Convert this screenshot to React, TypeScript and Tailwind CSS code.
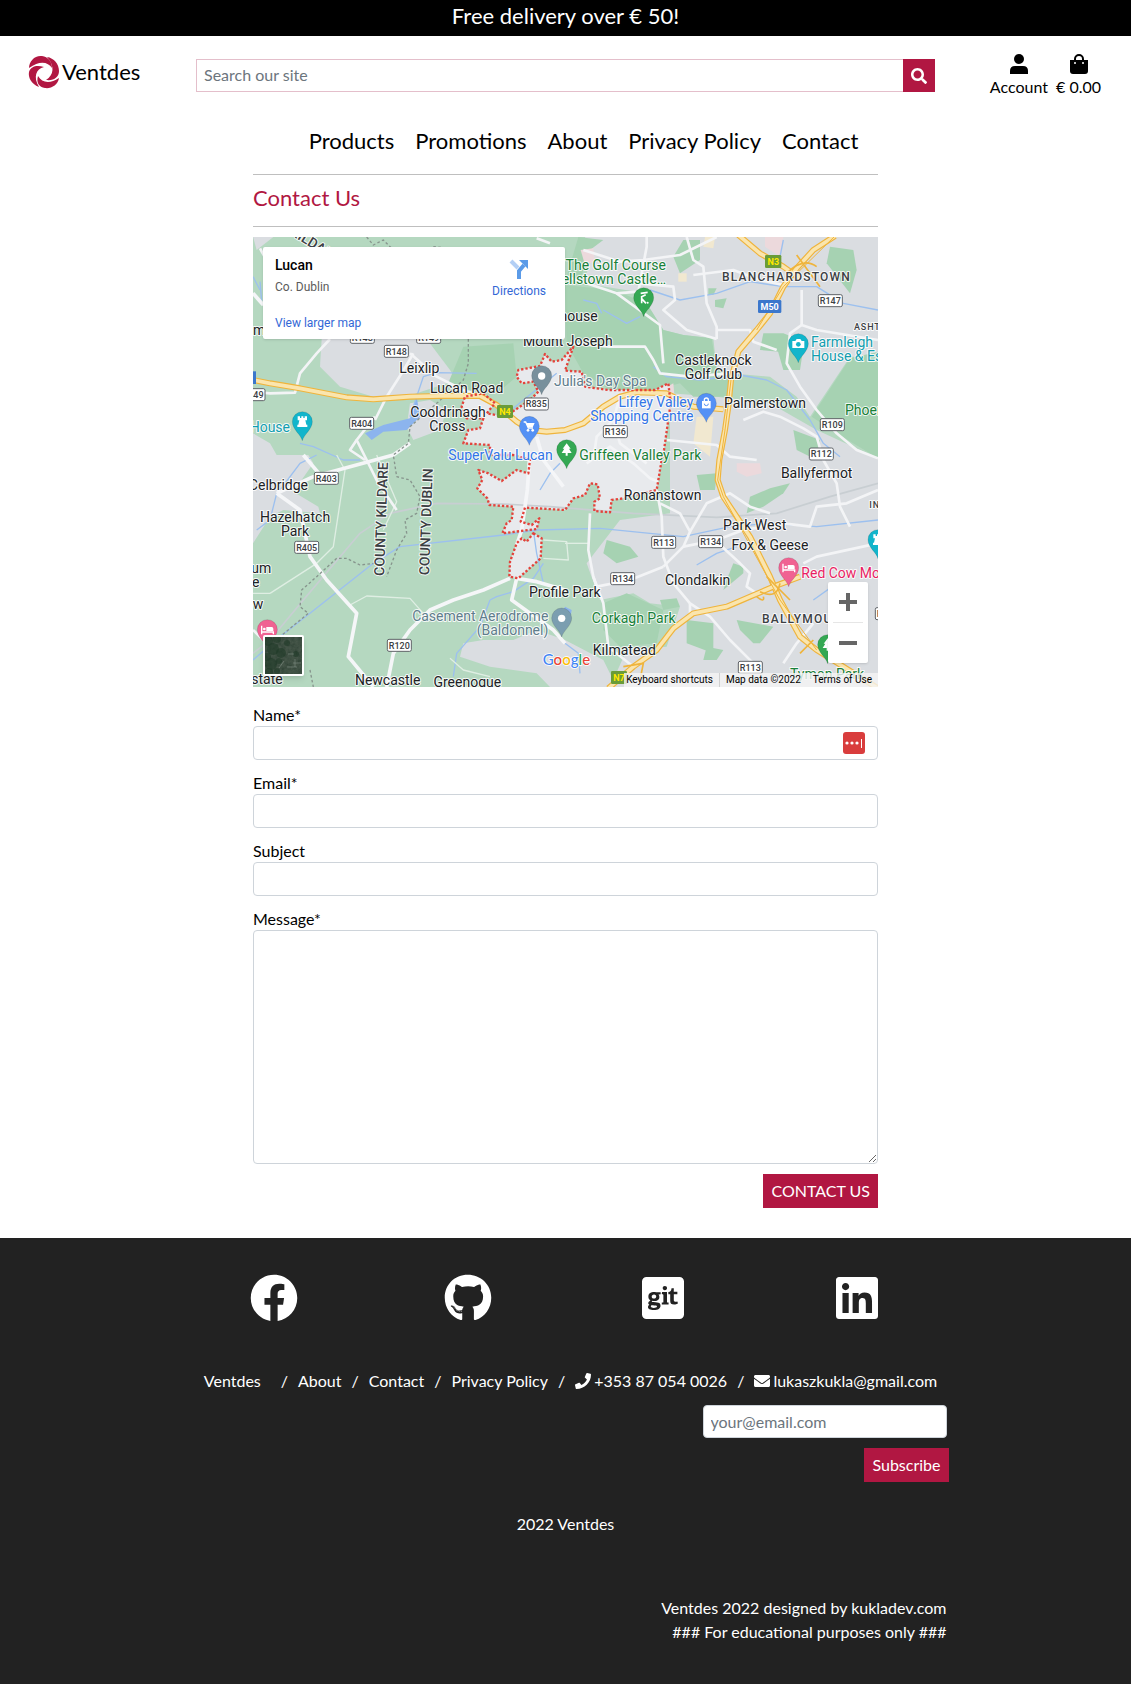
import React from "react";
import { FaFacebook, FaGithub, FaGitSquare, FaLinkedin, FaPhone, FaEnvelope, FaSearch } from "react-icons/fa";

const ROADS_THIN = [
  "M9,485 L60,490 L135,488 L150,430 L200,370 L240,327",
  "M375,560 L320,630 L350,690 L385,760 L440,840",
  "M320,630 L300,660 L345,690",
  "M30,55 L60,110",
  "M480,370 L560,440 L640,480 L700,500",
  "M490,370 L455,430 L410,500 L375,570",
  "M860,25 L900,40",
  "M950,140 L1100,190 L1165,185 L1190,50 L1190,21",
  "M960,340 L1080,350 L1185,350 L1210,390 L1230,430 L1320,440 L1440,430",
  "M1000,60 L1110,95 L1180,90 L1290,75 L1400,21",
  "M1100,190 L1230,285 L1240,400",
  "M1165,160 L1270,170 L1275,210 L1240,240 L1310,300 L1400,327",
  "M1310,21 L1330,90 L1360,110 L1370,220 L1400,290 L1400,327",
  "M1330,135 L1450,120 L1530,150 L1600,165",
  "M1400,300 L1500,300 L1510,335 L1580,360",
  "M1655,180 L1655,285 L1700,300 L1884,330",
  "M1655,285 L1620,310 L1610,400 L1650,470 L1700,540 L1760,610 L1820,660 L1884,685",
  "M1480,570 L1540,545 L1590,560 L1660,595 L1700,620 L1720,690 L1760,760 L1770,830 L1800,890",
  "M1110,500 L1090,570 L1040,620 L1030,690",
  "M1090,570 L1110,640 L1190,700",
  "M1250,630 L1400,645 L1440,680 L1520,690",
  "M1010,700 L1080,650 L1150,700 L1200,745 L1225,755",
  "M1220,780 L1235,860 L1240,980 L1270,1060 L1320,1120",
  "M1230,820 L1290,850 L1320,905 L1300,950 L1240,1010",
  "M1320,905 L1370,820 L1440,790 L1500,830 L1560,850",
  "M1300,950 L1400,930 L1480,900 L1600,880 L1680,890 L1700,830 L1790,820 L1884,780",
  "M1400,935 L1470,1000 L1500,1030 L1490,1070 L1520,1090",
  "M1020,850 L1015,960 L1030,1040 L1060,1120 L1075,1250 L1150,1310",
  "M1240,1010 L1140,1050 L1040,1070 L1030,1040",
  "M1320,1120 L1380,1160 L1440,1230 L1520,1310",
  "M1320,1120 L1320,1160",
  "M1660,1000 L1700,980 L1884,940",
  "M1690,1180 L1640,1240 L1600,1300",
  "M9,1200 L50,1240",
];

const ROADS_WIDE = [
  "M160,675 L215,740",
  "M80,790 L190,740 L300,710 L430,675 L480,640",
  "M80,790 L150,840 L180,980 L230,1050 L320,1150 L295,1280 L370,1371",
  "M410,1371 L430,1270 L480,1200 L540,1140 L610,1110 L700,1080 L780,1045",
  "M800,1045 L785,1110 L840,1150 L910,1200 L945,1240",
  "M800,1045 L860,1055 L945,1080",
  "M839,680 L832,780 L815,900 L800,945",
  "M860,620 L880,690 L940,770",
  "M9,190 L40,225",
];

const PARKS = [
  "M945,165 L1090,180 L1190,220 L1240,300 L1300,315 L1385,325 L1400,420 L1440,425 L1440,500 L1330,500 L1290,460 L1215,480 L1080,480 L1000,430 L950,340 Z",
  "M985,21 L1060,30 L1020,60 L990,150 L950,140 Z",
  "M1300,30 L1350,30 L1350,90 L1290,130 L1270,80 Z",
  "M1740,50 L1810,60 L1820,120 L1800,190 L1730,100 Z",
  "M1375,175 L1400,175 L1390,195 L1375,195 Z",
  "M1395,210 L1430,205 L1420,235 L1395,230 Z",
  "M1540,310 L1600,310 L1650,330 L1640,370 L1530,360 Z",
  "M1580,350 L1660,355 L1650,420 L1600,420 Z",
  "M1685,560 L1800,385 L1884,365 L1884,685 L1760,610 Z",
  "M1630,600 L1710,630 L1700,690 L1640,660 Z",
  "M1340,735 L1400,730 L1395,780 L1350,780 Z",
  "M1500,800 L1560,775 L1620,760 L1600,790 L1540,830 L1490,850 Z",
  "M1180,700 L1230,680 L1220,750 L1170,740 Z",
  "M1070,930 L1140,950 L1165,980 L1100,1000 L1060,970 Z",
  "M1060,1120 L1130,1090 L1240,1140 L1220,1240 L1110,1250 L1060,1200 Z",
  "M1230,1110 L1280,1105 L1290,1130 L1240,1140 Z",
  "M1310,1170 L1390,1180 L1390,1270 L1310,1240 Z",
  "M1460,1170 L1570,1190 L1530,1240 L1510,1240 L1470,1200 Z",
  "M1370,1250 L1420,1260 L1400,1290 L1360,1290 Z",
  "M1450,1000 L1480,1010 L1480,1030 L1420,1080 L1430,1050 Z",
  "M590,470 L640,350 L790,340 L800,440 L740,490 Z",
  "M745,615 L765,590 L780,615 Z",
  "M880,700 L945,690 L940,780 L920,750 Z",
];

const URBAN = [
  "M1005,21 L1884,21 L1884,380 L1800,380 L1680,560 L1640,500 L1560,440 L1440,430 L1400,420 L1390,325 L1300,315 L1240,300 L1190,220 L1160,185 L1000,160 L1020,100 Z",
  "M1260,490 L1400,500 L1560,520 L1700,600 L1884,685 L1884,1371 L1080,1371 L1130,1260 L1250,1250 L1290,1130 L1200,1120 L1150,1090 L1050,1110 L1010,1000 L1110,870 L1260,850 Z",
  "M215,327 L530,327 L600,420 L620,450 L500,490 L440,505 L370,500 L270,470 L210,410 Z",
  "M480,520 L540,510 L590,540 L570,600 L490,630 L470,590 Z",
  "M9,20 L70,21 L20,60 Z",
  "M9,610 L60,640 L80,675 L175,675 L190,700 L130,785 L205,830 L210,850 L100,840 L60,860 L9,940 Z",
  "M640,1240 L700,1230 L790,1230 L860,1200 L945,1230 L1060,1290 L1100,1371 L900,1371 L860,1330 L720,1310 L630,1280 Z",
];

const WATER = [
  "M9,140 L30,180", "M30,155 L35,215",
  "M480,560 L500,500 L520,440 L560,428 L680,430",
  "M330,690 L280,690 L190,650 L150,640",
  "M80,790 L60,870 L20,900", "M90,780 L150,700 L200,675",
  "M9,1290 L90,1220 L180,1150 L370,1000 L450,950 L760,915 L860,900 L1050,895 L1200,910 L1300,920 L1440,890 L1560,880 L1700,890 L1884,870",
  "M720,1110 L740,1100 L790,1085 L850,1045 L880,1000",
  "M720,1110 L690,1190 L620,1270 L610,1340",
  "M1000,210 L1040,220 L1055,250",
  "M1060,240 L1130,280 L1170,260",
  "M1210,410 L1250,440 L1350,450 L1470,435 L1550,450 L1610,480 L1680,570 L1720,640 L1770,680",
  "M1200,180 L1290,210 L1400,190 L1500,155 L1600,170 L1700,170 L1780,220 L1884,240",
  "M1590,80 L1600,30",
  "M760,560 L820,510 L870,470 L920,430",
  "M870,780 L900,730 L930,700",
  "M850,900 L860,970 L880,1060",
  "M1340,1005 L1400,970 L1460,950",
  "M1690,1110 L1760,1060",
  "M945,1240 L985,1270 L990,1330",
];

const COUNTY = [
  "M350,21 L370,45 L400,30 L440,70",
  "M550,50 L600,55 L650,70 L700,60",
  "M655,327 L655,400 L640,450 L560,520 L480,590 L475,640 L430,675 L440,740 L480,750 L510,800 L500,850 L465,870 L470,910 L440,960 L410,1040",
  "M375,1000 L330,1005 L290,985 L260,985 L200,1040 L155,1080 L150,1130 L175,1150 L90,1220",
  "M180,1320 L190,1371",
];

const MOTORWAYS = [
  "M9,450 L60,460 L150,475 L290,502 L370,508 L480,500 L600,497 L690,498 L740,525 L800,575 L840,600 L890,605 L945,600 L1000,580 L1060,530 L1110,500 L1160,487 L1250,490 L1330,530 L1420,538",
  "M1465,15 L1530,70 L1600,110 L1650,145",
  "M1755,18 L1690,60 L1640,115 L1600,170 L1560,250 L1520,300 L1465,365 L1443,450 L1435,530 L1425,600 L1408,690 L1403,750 L1420,800 L1500,920 L1560,1040 L1590,1110 L1650,1220 L1700,1260 L1884,1375",
  "M1075,1375 L1150,1310 L1220,1260 L1270,1195 L1330,1150 L1430,1130 L1500,1100 L1570,1070 L1650,1040",
];

const LUCAN =
  "M970,350 L945,422 L995,425 L1005,470 L1075,480 L1215,480 L1255,460 L1262,520 L1242,660 L1235,690 L1220,780 L1120,805 L1085,810 L1080,847 L1033,843 L1033,815 L1050,805 L1043,763 L1020,760 L1005,795 L970,805 L945,840 L825,833 L812,875 L845,885 L868,865 L860,897 L757,910 L770,880 L785,870 L790,830 L718,825 L712,805 L682,775 L697,750 L685,720 L715,730 L755,753 L800,720 L835,730 L840,690 L790,675 L720,675 L720,645 L640,640 L655,600 L690,595 L700,565 L650,565 L635,530 L645,500 L700,490 L735,520 L710,550 L765,560 L840,510 L865,485 L850,455 L815,460 L800,440 L805,420 L870,408 L885,372 L905,395 L935,390 Z";
const LUCAN_SOUTH = "M850,910 L875,925 L872,985 L805,1045 L778,1040 L780,995 L800,940 L815,925 L830,935 Z";

type Label = { x: number; y: number; t: string; c?: string; a?: "start" | "middle" | "end" };
const LABELS: Label[] = [
  { x: 508, y: 430, t: "Leixlip", a: "middle" },
  { x: 650, y: 489, t: "Lucan Road", a: "middle" },
  { x: 594, y: 561, t: "Cooldrinagh", a: "middle" },
  { x: 592, y: 604, t: "Cross", a: "middle" },
  { x: 9, y: 315, t: "m" },
  { x: 1043, y: 273, t: "house", a: "end" },
  { x: 1088, y: 348, t: "Mount Joseph", a: "end" },
  { x: 1390, y: 405, t: "Castleknock", a: "middle" },
  { x: 1390, y: 447, t: "Golf Club", a: "middle" },
  { x: 1545, y: 534, t: "Palmerstown", a: "middle" },
  { x: 1700, y: 744, t: "Ballyfermot", a: "middle" },
  { x: 1238, y: 810, t: "Ronanstown", a: "middle" },
  { x: 1514, y: 900, t: "Park West", a: "middle" },
  { x: 1560, y: 960, t: "Fox & Geese", a: "middle" },
  { x: 1343, y: 1065, t: "Clondalkin", a: "middle" },
  { x: 1123, y: 1274, t: "Kilmatead", a: "middle" },
  { x: 1052, y: 1101, t: "Profile Park", a: "end" },
  { x: 174, y: 780, t: "Celbridge", a: "end" },
  { x: 135, y: 876, t: "Hazelhatch", a: "middle" },
  { x: 135, y: 918, t: "Park", a: "middle" },
  { x: 64, y: 1029, t: "um", a: "end" },
  { x: 28, y: 1071, t: "e", a: "end" },
  { x: 40, y: 1137, t: "w", a: "end" },
  { x: 98, y: 1362, t: "state", a: "end" },
  { x: 413, y: 1365, t: "Newcastle", a: "middle" },
  { x: 652, y: 1371, t: "Greenogue", a: "middle" },
  { x: 120, y: 606, t: "House", c: "#129eaf", a: "end" },
  { x: 1683, y: 351, t: "Farmleigh", c: "#129eaf" },
  { x: 1683, y: 393, t: "House & Estate", c: "#129eaf" },
  { x: 1248, y: 120, t: "The Golf Course", c: "#188038", a: "end" },
  { x: 1248, y: 162, t: "Luttrellstown Castle…", c: "#188038", a: "end" },
  { x: 988, y: 690, t: "Griffeen Valley Park", c: "#188038" },
  { x: 1785, y: 556, t: "Phoenix", c: "#188038" },
  { x: 1151, y: 1179, t: "Corkagh Park", c: "#188038", a: "middle" },
  { x: 1620, y: 1346, t: "Tymon Park", c: "#188038" },
  { x: 912, y: 468, t: "Julia's Day Spa", c: "#5f7d8c" },
  { x: 895, y: 1173, t: "Casement Aerodrome", c: "#5f7d8c", a: "end" },
  { x: 895, y: 1215, t: "(Baldonnel)", c: "#5f7d8c", a: "end" },
  { x: 908, y: 690, t: "SuperValu Lucan", c: "#3275e6", a: "end" },
  { x: 1330, y: 532, t: "Liffey Valley", c: "#3275e6", a: "end" },
  { x: 1330, y: 574, t: "Shopping Centre", c: "#3275e6", a: "end" },
  { x: 1654, y: 1044, t: "Red Cow Moran", c: "#e91e63" },
];

const SHIELDS: [number, number, string][] = [
  [337, 322, "R148"], [536, 322, "R149"], [439, 364, "R148"], [9, 494, "R449"], [335, 580, "R404"], [859, 522, "R835"],
  [1741, 212, "R147"], [1096, 605, "R136"], [1747, 584, "R109"], [1714, 672, "R112"], [229, 745, "R403"],
  [170, 952, "R405"], [448, 1246, "R120"], [1241, 937, "R113"], [1382, 935, "R134"], [1118, 1046, "R134"],
  [1501, 1312, "R113"], [1912, 1151, "R110"],
];

type PinKind = "dot" | "castle" | "cart" | "tree" | "golf" | "camera" | "bag" | "bed";
const PINS: [number, number, string, PinKind][] = [
  [875, 438, "#78909c", "dot"], [935, 1165, "#7b9eb0", "dot"], [157, 576, "#12b5cb", "castle"],
  [838, 590, "#5491f5", "cart"], [950, 660, "#34a853", "tree"], [1181, 204, "#34a853", "golf"],
  [1645, 342, "#12b5cb", "camera"], [1369, 521, "#5491f5", "bag"], [1616, 1014, "#f06292", "bed"],
  [52, 1200, "#f06292", "bed"], [1884, 930, "#12b5cb", "castle"], [1733, 1245, "#34a853", "tree"],
];

const GLYPHS: Record<PinKind, React.ReactNode> = {
  dot: <circle r="11" fill="#fff" />,
  castle: <path d="M-14,-17 h7 v5 h4 v-5 h6 v5 h4 v-5 h7 v12 h-5 l3,13 h3 v7 h-30 v-7 h3 l3,-13 h-5 Z" fill="#fff" />,
  cart: (
    <g>
      <path d="M-17,-14 h6 l8,18 h14" fill="none" stroke="#fff" strokeWidth="4" />
      <path d="M-9,-11 h25 l-6,13 h-14 Z" fill="#fff" />
      <circle cx="-4" cy="11" r="4" fill="#fff" />
      <circle cx="10" cy="11" r="4" fill="#fff" />
    </g>
  ),
  tree: <path d="M0,-20 L12,-4 h-5 L15,9 h-12 v8 h-6 v-8 h-12 L-7,-4 h-5 Z" fill="#fff" />,
  golf: (
    <g>
      <path d="M-9,-14 L12,-17 M-6,-4 L6,-10 M-6,-6 V16 M-6,2 L7,16" fill="none" stroke="#fff" strokeWidth="5" />
      <circle cx="12" cy="14" r="3" fill="#fff" />
    </g>
  ),
  camera: (
    <g>
      <path d="M-18,-9 h9 l4,-6 h11 l4,6 h8 v21 h-36 Z" fill="#fff" />
      <circle cx="0" cy="1" r="7" fill="#12b5cb" />
    </g>
  ),
  bag: (
    <g>
      <path d="M-13,-8 h26 v22 h-26 Z" fill="#fff" />
      <path d="M-6,-8 v-3 a6,6 0 0 1 12,0 v3" fill="none" stroke="#fff" strokeWidth="4" />
      <path d="M-6,0 a6,6 0 0 0 12,0" fill="none" stroke="#5491f5" strokeWidth="3" />
    </g>
  ),
  bed: (
    <g>
      <path d="M-17,-13 v26 M-17,6 h35 v7" fill="none" stroke="#fff" strokeWidth="4" />
      <path d="M-3,-9 h16 a5,5 0 0 1 5,5 v7 h-21 Z" fill="#fff" />
      <circle cx="-9" cy="-3" r="4" fill="#fff" />
    </g>
  ),
};

function Lines({ paths, stroke, width, dash }: { paths: string[]; stroke: string; width: number; dash?: string }) {
  return (
    <g fill="none" stroke={stroke} strokeWidth={width} strokeLinejoin="round" strokeDasharray={dash}>
      {paths.map((d) => (
        <path key={d} d={d} />
      ))}
    </g>
  );
}

function MapCanvas() {
  return (
    <svg
      viewBox="9 21 1875 1350"
      preserveAspectRatio="xMidYMid slice"
      className="block h-full w-full"
      fontFamily="Roboto, sans-serif"
      role="img"
      aria-label="Map of Lucan, Co. Dublin"
    >
      <rect x="9" y="21" width="1875" height="1350" fill="#b5d8c0" />
      <g fill="#dadde1">{URBAN.map((d) => <path key={d} d={d} />)}</g>
      <g fill="#a6d2b2">{PARKS.map((d) => <path key={d} d={d} />)}</g>
      <g fill="#ecd9dc">
        <path d="M992,60 L1030,55 L1035,95 L1005,105 Z" />
        <path d="M1545,21 L1600,21 L1590,80 L1545,50 Z" />
        <path d="M1460,700 L1530,700 L1535,730 L1490,740 L1460,725 Z" />
        <path d="M1220,490 L1270,460 L1275,520 L1240,525 Z" />
      </g>
      <g fill="#f1e8d0">
        <path d="M1340,560 L1390,560 L1380,680 L1330,640 Z" />
        <path d="M1285,130 L1310,130 L1310,155 L1285,155 Z" />
        <path d="M1365,21 L1395,21 L1390,55 L1360,50 Z" />
      </g>
      <path d="M345,610 L400,585 L480,565 L500,500 L510,560 L470,600 L400,605 L365,630 Z" fill="#8cb4ee" />
      <path d="M945,1130 L965,1140 L960,1170 L935,1150 Z" fill="#8cb4ee" />
      <path d={LUCAN} fill="#e8eaed" />
      <path d={LUCAN_SOUTH} fill="#e8eaed" />
      <Lines paths={WATER} stroke="#9cc0ef" width={4} />
      <Lines
        paths={[
          "M9,1270 L60,1230 L160,1110 L330,910 L420,850 L560,820 L760,822 L900,830 L1150,850 L1400,862 L1580,850 L1740,800 L1884,760",
        ]}
        stroke="#c8ced2"
        width={5}
      />
      <Lines
        paths={[
          "M60,1090 L9,1090 M60,1090 L200,1000 L250,950 L285,720 L260,675",
          "M300,1125 L350,1098 L480,1105 L520,1150",
          "M380,675 L440,815 L400,900",
          "M880,930 L950,935 L955,990 L880,985",
          "M600,1285 L640,1320 L720,1340",
          "M945,940 L1015,940",
        ]}
        stroke="#dfeee3"
        width={4}
      />
      <Lines paths={ROADS_THIN} stroke="#f3f4f6" width={8} />
      <Lines paths={ROADS_WIDE} stroke="#f5f6f8" width={11} />
      <Lines paths={COUNTY} stroke="#87958d" width={4} dash="8 7" />
      <Lines paths={MOTORWAYS} stroke="#efb43c" width={18} />
      <Lines paths={MOTORWAYS} stroke="#fae5ae" width={11} />
      <Lines paths={["M1443,450 L1425,600 L1403,750 L1420,800 L1590,1110 L1700,1260", "M1755,18 L1600,170 L1520,300"]} stroke="#efb43c" width={3} />
      <g fill="none" stroke="#efb43c" strokeWidth="5">
        <path d="M1640,75 L1680,130 L1710,170 M1610,130 Q1660,80 1700,110" />
        <path d="M1530,1085 Q1580,1110 1590,1060 M1550,1040 L1620,1110 M1520,1100 q25,20 20,0" />
        <path d="M1120,1310 L1180,1300 L1170,1350 M1650,1270 L1690,1230" />
      </g>
      <Lines paths={[LUCAN, LUCAN_SOUTH]} stroke="#e4423b" width={7} dash="7 6" />

      <g stroke="#5f6368" strokeWidth="3" fill="#fff">
        {SHIELDS.map(([x, y]) => (
          <rect key={`${x}-${y}`} x={x - 36} y={y - 18} width="72" height="36" rx="5" />
        ))}
      </g>
      <g fontWeight="500" fill="#3c4043" textAnchor="middle">
        {SHIELDS.map(([x, y, t]) => (
          <text key={`${x}-${y}`} x={x} y={y + 10} fontSize="27">{t}</text>
        ))}
      </g>

      <g fontSize="42" stroke="#fff" strokeOpacity="0.85" strokeWidth="6" strokeLinejoin="round" paintOrder="stroke">
        {LABELS.map((l) => (
          <text key={l.t + l.y} x={l.x} y={l.y} fill={l.c ?? "#202124"} textAnchor={l.a ?? "start"}>{l.t}</text>
        ))}
        <g fill="#3c4043" fontWeight="500" fontSize="36">
          <text className="tracking-widest" x="1416" y="153">BLANCHARDSTOWN</text>
          <text className="tracking-widest" x="1536" y="1179">BALLYMOUNT</text>
          <text className="tracking-widest" fontSize="27" x="1812" y="300">ASHTOWN</text>
          <text className="tracking-widest" fontSize="27" x="1858" y="834">INCHICORE</text>
        </g>
        <g fill="#3c4043" fontSize="42" fontWeight="500">
          <text transform="translate(402,1038) rotate(-88)">COUNTY KILDARE</text>
          <text transform="translate(537,1036) rotate(-88)">COUNTY DUBLIN</text>
          <text transform="translate(118,12) rotate(32)">KILDARE</text>
        </g>
      </g>

      {PINS.map(([x, y, color, kind]) => (
        <g key={`${x}-${y}`} transform={`translate(${x},${y})`}>
          <path
            d="M0,56 C-4,38 -30,22 -30,-1 A30,30 0 0 1 30,-1 C30,22 4,38 0,56 Z"
            fill={color}
            stroke="#000"
            strokeOpacity="0.18"
            strokeWidth="2"
          />
          {GLYPHS[kind]}
        </g>
      ))}

      <g fontWeight="700" fontSize="27" textAnchor="middle">
        <rect x="741" y="525" width="48" height="39" rx="4" fill="#6a9c38" />
        <text x="765" y="554" fill="#ffe800">N4</text>
        <rect x="1545" y="75" width="49" height="39" rx="4" fill="#6a9c38" />
        <text x="1570" y="105" fill="#ffe800">N3</text>
        <rect x="1083" y="1323" width="48" height="39" rx="4" fill="#6a9c38" />
        <text x="1107" y="1352" fill="#ffe800">N7</text>
        <rect x="1524" y="210" width="70" height="39" rx="4" fill="#3b77cc" />
        <text x="1559" y="239" fill="#fff">M50</text>
        <rect x="9" y="424" width="9" height="38" fill="#3b77cc" />
      </g>

      <text x="878" y="1306" fontSize="45" fontWeight="500" fontFamily="Lato, sans-serif" stroke="#fff" strokeWidth="5" paintOrder="stroke">
        <tspan fill="#4285f4">G</tspan>
        <tspan fill="#ea4335">o</tspan>
        <tspan fill="#fbbc04">o</tspan>
        <tspan fill="#4285f4">g</tspan>
        <tspan fill="#34a853">l</tspan>
        <tspan fill="#ea4335">e</tspan>
      </text>
    </svg>
  );
}

const CANOPY = [
  [3, 4, 5], [12, 2, 4], [8, 12, 6], [2, 20, 4], [16, 16, 5], [6, 27, 6], [14, 24, 3], [4, 35, 4], [22, 6, 3], [31, 17, 3], [12, 34, 3],
];

function SatelliteThumb() {
  return (
    <button type="button" aria-label="Show satellite imagery" className="absolute bottom-[11px] left-[10px] size-[41px] overflow-hidden rounded-xs border-2 border-white shadow-md">
      <svg viewBox="0 0 37 37" className="block size-full">
        <filter id="terrain" x="0" y="0" width="1" height="1">
          <feTurbulence type="fractalNoise" baseFrequency="0.3" numOctaves="4" seed="4" />
          <feColorMatrix values="0.4 0 0 0 0  0.35 0 0 0 0.09  0.35 0 0 0 0.04  0 0 0 0 1" colorInterpolationFilters="sRGB" />
        </filter>
        <rect width="37" height="37" fill="#35493c" />
        <rect width="37" height="37" filter="url(#terrain)" opacity="0.45" />
        <g fill="#1f3a28" fillOpacity="0.6">
          {CANOPY.map(([x, y, r]) => (
            <circle key={`${x}-${y}`} cx={x} cy={y} r={r} />
          ))}
        </g>
        <path d="M14,31 L19,24 M23,17 h6 M28,26 h8 M30,22 v8 M22,30 h10" stroke="#9aa79b" strokeOpacity="0.45" />
      </svg>
    </button>
  );
}

function ContactMap() {
  return (
    <section aria-label="Location" className="relative h-[450px] w-full overflow-hidden font-[Roboto,sans-serif]">
      <MapCanvas />
      <div className="absolute top-[10px] left-[10px] flex h-[92px] w-[302px] justify-between rounded-xs bg-white px-3 py-2 text-xs shadow">
        <div className="flex flex-col">
          <span className="text-sm font-medium text-black">Lucan</span>
          <span className="mt-1 text-[#5b5b5b]">Co. Dublin</span>
          <a href="#map" className="mt-auto text-[#3367d6] hover:underline">View larger map</a>
        </div>
        <a href="#directions" className="mr-[7px] flex flex-col items-center pt-1 text-[#3367d6]">
          <svg viewBox="0 0 20 20" className="size-5" aria-hidden="true">
            <path d="M2,2 L9,9" stroke="#b3cff5" strokeWidth="4" fill="none" />
            <path d="M10,20 V12 L15,6" stroke="#5b9be8" strokeWidth="4" fill="none" />
            <path d="M10,1 h9 v9 Z" fill="#5b9be8" />
          </svg>
          <span className="mt-1">Directions</span>
        </a>
      </div>
      <SatelliteThumb />
      <div className="absolute right-[10px] bottom-6 flex w-10 flex-col items-center rounded-xs bg-white shadow">
        <button type="button" aria-label="Zoom in" className="flex size-10 items-center justify-center">
          <svg viewBox="0 0 18 18" className="size-[18px]"><path d="M0,9 H18 M9,0 V18" stroke="#666" strokeWidth="4" /></svg>
        </button>
        <span className="h-px w-[30px] bg-[#e6e6e6]" />
        <button type="button" aria-label="Zoom out" className="flex size-10 items-center justify-center">
          <svg viewBox="0 0 18 18" className="size-[18px]"><path d="M0,9 H18" stroke="#666" strokeWidth="4" /></svg>
        </button>
      </div>
      <div className="absolute right-0 bottom-0 flex h-[14px] items-center bg-[#f5f5f5]/80 text-[10px] leading-[14px] text-black">
        <button type="button" className="pr-[6px] pl-[2px]">Keyboard shortcuts</button>
        <span className="border-l border-[#d0d0d0] px-[6px]">Map data ©2022</span>
        <a href="#terms" className="px-[6px]">Terms of Use</a>
      </div>
    </section>
  );
}

function Logo() {
  return (
    <svg viewBox="0 0 32 34" className="h-[34px] w-8" aria-hidden="true" fill="#b11742">
      <path d="M1,13 C1,6 7,0 14,1 C20,2 24,6 24,13 C20,7 12,5 1,13 Z" />
      <path d="M19,2 C26,3 31,9 31,16 C31,22 26,26 18,25 C26,20 27,11 19,2 Z" />
      <path d="M31,23 C30,30 23,34 17,33 C11,32 8,28 10,21 C14,28 22,29 31,23 Z" />
      <path d="M11,32 C3,29 0,22 1,17 C3,11 9,10 16,12 C8,14 5,22 11,32 Z" />
    </svg>
  );
}

function Field({ id, label, children }: { id: string; label: string; children: React.ReactNode }) {
  return (
    <div className="mb-[10px]">
      <label htmlFor={id} className="block h-6 leading-[26px] text-black">{label}</label>
      {children}
    </div>
  );
}

const FIELD = "block h-[34px] w-full rounded border border-[#ced4da] bg-white px-2 outline-none";
const NAV = ["Products", "Promotions", "About", "Privacy Policy", "Contact"];

export default function App() {
  return (
    <div className="flex min-h-screen flex-col bg-white font-[Lato,sans-serif] text-base text-black">
      <div className="flex h-9 items-center justify-center bg-black pb-1 text-[22px] leading-8 text-white">Free delivery over € 50!</div>

      <header>
        <div className="flex items-start pt-[14px] pr-[30px] pl-7">
          <a href="#home" className="mt-[5px] flex w-[168px] items-center gap-[2px] text-[22px] leading-8">
            <Logo />
            <span>Ventdes</span>
          </a>
          <form className="mt-[9px] flex flex-1" onSubmit={(e) => e.preventDefault()}>
            <input
              type="search"
              aria-label="Search our site"
              placeholder="Search our site"
              className="h-[33px] min-w-0 flex-1 border border-r-0 border-[#e4bfcb] px-[7px] pb-[2px] outline-none placeholder:text-[#6c757d]"
            />
            <button type="submit" aria-label="Search" className="flex h-[33px] w-8 items-center justify-center bg-[#b11742] text-white">
              <FaSearch className="size-4" />
            </button>
          </form>
          <nav aria-label="Account" className="ml-[55px] flex gap-2 leading-6">
            <a href="#account" className="flex flex-col items-center">
              <svg viewBox="0 0 18 22" className="mt-[3px] h-[22px] w-[18px]" aria-hidden="true">
                <circle cx="9" cy="6" r="5" />
                <path d="M0,21 V18 Q0,13 5,13 H13 Q18,13 18,18 V21 Z" />
              </svg>
              <span>Account</span>
            </a>
            <a href="#bag" className="flex flex-col items-center">
              <svg viewBox="0 0 18 22" className="mt-[3px] h-[22px] w-[18px]" aria-hidden="true">
                <path d="M5,8 V6 a4,4 0 0 1 8,0 V8" fill="none" stroke="#000" strokeWidth="2" />
                <path d="M0,7 H18 V18 Q18,21 15,21 H3 Q0,21 0,18 Z" />
                <circle cx="5" cy="10" r="1" fill="#fff" />
                <circle cx="13" cy="10" r="1" fill="#fff" />
              </svg>
              <span>€ 0.00</span>
            </a>
          </nav>
        </div>
        <nav aria-label="Main" className="mt-[26px] flex justify-center gap-[21px] pl-9 text-[22px] leading-8">
          {NAV.map((item) => (
            <a key={item} href="#nav" className="hover:underline">{item}</a>
          ))}
        </nav>
      </header>

      <main className="mx-auto w-full max-w-[625px] pb-[30px]">
        <hr className="mt-[17px] border-[#bfbfbf]" />
        <h1 className="pt-[6px] pb-3 text-[22px] leading-[33px] text-[#b11742]">Contact Us</h1>
        <hr className="mb-[10px] border-[#bfbfbf]" />
        <ContactMap />
        <form className="mt-[15px]" onSubmit={(e) => e.preventDefault()}>
          <Field id="name" label="Name*">
            <div className="relative">
              <input id="name" type="text" className={FIELD} />
              <svg viewBox="0 0 22 22" className="absolute top-[6px] right-[13px] size-[22px]" aria-hidden="true">
                <rect width="22" height="22" rx="3" fill="#d93d3d" />
                <g fill="#fff">
                  <circle cx="4" cy="11" r="1.6" />
                  <circle cx="9" cy="11" r="1.6" />
                  <circle cx="14" cy="11" r="1.6" />
                  <rect x="18" y="7" width="1" height="9" />
                </g>
              </svg>
            </div>
          </Field>
          <Field id="email" label="Email*">
            <input id="email" type="email" className={FIELD} />
          </Field>
          <Field id="subject" label="Subject">
            <input id="subject" type="text" className={FIELD} />
          </Field>
          <Field id="message" label="Message*">
            <textarea id="message" className="block h-[234px] w-full resize rounded border border-[#ced4da] px-2 py-1 outline-none" />
          </Field>
          <div className="flex justify-end">
            <button type="submit" className="h-[34px] bg-[#b11742] px-2 text-white">CONTACT US</button>
          </div>
        </form>
      </main>

      <footer className="flex-1 bg-[#222] px-4 text-white">
        <div className="mx-auto flex w-full max-w-[778px] flex-col">
          <div className="grid grid-cols-4 justify-items-center pt-9 text-[48px]">
            <a href="#facebook" aria-label="Facebook"><FaFacebook /></a>
            <a href="#github" aria-label="GitHub"><FaGithub /></a>
            <a href="#git" aria-label="Git"><FaGitSquare /></a>
            <a href="#linkedin" aria-label="LinkedIn"><FaLinkedin /></a>
          </div>
          <div className="mt-[47px] flex justify-center gap-[10px] pl-[10px] leading-6 whitespace-nowrap">
            <a href="#home" className="mr-[10px]">Ventdes</a>
            <span>/</span>
            <a href="#about">About</a>
            <span>/</span>
            <a href="#contact">Contact</a>
            <span>/</span>
            <a href="#privacy">Privacy Policy</a>
            <span>/</span>
            <a href="#phone" className="flex items-center gap-[3px]"><FaPhone />+353 87 054 0026</a>
            <span>/</span>
            <a href="#mail" className="flex items-center gap-[3px]"><FaEnvelope />lukaszkukla@gmail.com</a>
          </div>
          <form className="mt-3 flex flex-col items-end pr-[6px]" onSubmit={(e) => e.preventDefault()}>
            <input
              type="email"
              aria-label="Your email"
              placeholder="your@email.com"
              className="mr-[2px] h-[33px] w-[244px] rounded border border-[#ced4da] bg-white px-[7px] text-black outline-none placeholder:text-[#6c757d]"
            />
            <button type="submit" className="mt-[10px] h-[34px] bg-[#b11742] px-2">Subscribe</button>
          </form>
          <p className="mt-[30px] text-center leading-6">2022 Ventdes</p>
          <p className="mt-[60px] pr-2 pb-10 text-right leading-6">
            Ventdes 2022 designed by kukladev.com
            <br />
            ### For educational purposes only ###
          </p>
        </div>
      </footer>
    </div>
  );
}
